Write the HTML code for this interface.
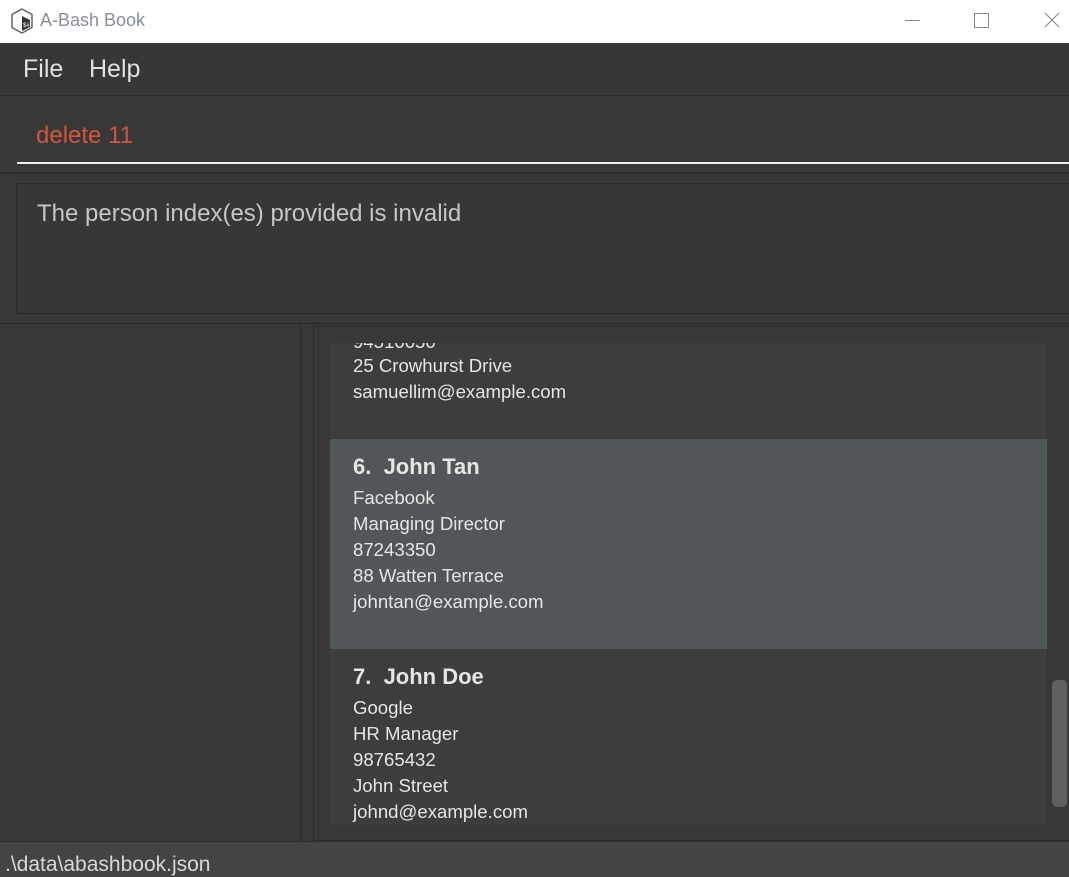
<!DOCTYPE html>
<html><head><meta charset="utf-8">
<style>
*{margin:0;padding:0;box-sizing:border-box}
body{width:1069px;height:877px;overflow:hidden;background:#383838;font-family:"Liberation Sans",sans-serif;position:relative}
.abs{position:absolute}
.t{color:#e6e6e6;font-size:18.6px;line-height:26px;white-space:nowrap}
</style></head><body>
<div class="abs" style="left:0;top:0;width:1069px;height:43px;background:#fff"></div>
<svg class="abs" style="left:10px;top:8px" width="24" height="26" viewBox="0 0 24 26"><path d="M12 1 L22 6.5 V19.5 L12 25 L2 19.5 V6.5 Z" fill="#fff" stroke="#666" stroke-width="1.5"/><path d="M12 8 L20 12 V19 L12 23 Z" fill="#333"/><text x="13" y="19" font-size="6" fill="#fff" font-family="Liberation Sans">$#</text></svg>
<div class="abs" style="left:40px;top:10px;font-size:18px;color:#8a8f96">A-Bash Book</div>
<div class="abs" style="left:905px;top:20px;width:15px;height:1px;background:#888"></div>
<div class="abs" style="left:974px;top:13px;width:15px;height:15px;border:1px solid #888"></div>
<svg class="abs" style="left:1044px;top:12px" width="16" height="16"><path d="M1 1L15 15M15 1L1 15" stroke="#888" stroke-width="1.1"/></svg>
<div class="abs" style="left:0;top:43px;width:1069px;height:53px;background:#373737;border-bottom:1px solid #2b2b2b"></div>
<div class="abs" style="left:23px;top:55px;font-size:25px;color:#e0e0e0">File</div>
<div class="abs" style="left:89px;top:55px;font-size:25px;color:#e0e0e0">Help</div>
<div class="abs" style="left:0;top:97px;width:1069px;height:77px;background:#383838;border-bottom:2px solid #2e2e2e"></div>
<div class="abs" style="left:36px;top:122px;font-size:24px;color:#d4553f">delete 11</div>
<div class="abs" style="left:17px;top:162px;width:1052px;height:2px;background:#ededed"></div>
<div class="abs" style="left:0;top:176px;width:1069px;height:148px;background:#383838;border-bottom:1px solid #2a2a2a"></div>
<div class="abs" style="left:16px;top:183px;width:1060px;height:131px;border:1px solid #2a2a2a;background:#373737"></div>
<div class="abs" style="left:37px;top:200px;font-size:24px;color:#c6c6c6">The person index(es) provided is invalid</div>
<div class="abs" style="left:300px;top:325px;width:2px;height:517px;background:#2e2e2e"></div>
<div class="abs" style="left:313px;top:326px;width:760px;height:515px;border:1px solid #2a2a2a;background:#383838"></div>
<div class="abs" style="left:330px;top:343px;width:717px;height:95px;background:#3c3d3f;overflow:hidden">
 <div class="t abs" style="left:23px;top:-14px">94510050</div>
 <div class="t abs" style="left:23px;top:10px">25 Crowhurst Drive</div>
 <div class="t abs" style="left:23px;top:36px">samuellim@example.com</div>
</div>
<div class="abs" style="left:330px;top:439px;width:717px;height:210px;background:#515658">
 <div class="t abs" style="left:23px;top:15px;font-size:22px;font-weight:bold">6.&nbsp; John Tan</div>
 <div class="t abs" style="left:23px;top:46px">Facebook</div>
 <div class="t abs" style="left:23px;top:72px">Managing Director</div>
 <div class="t abs" style="left:23px;top:98px">87243350</div>
 <div class="t abs" style="left:23px;top:124px">88 Watten Terrace</div>
 <div class="t abs" style="left:23px;top:150px">johntan@example.com</div>
</div>
<div class="abs" style="left:330px;top:649px;width:717px;height:176px;background:#3c3d3f">
 <div class="t abs" style="left:23px;top:15px;font-size:22px;font-weight:bold">7.&nbsp; John Doe</div>
 <div class="t abs" style="left:23px;top:46px">Google</div>
 <div class="t abs" style="left:23px;top:72px">HR Manager</div>
 <div class="t abs" style="left:23px;top:98px">98765432</div>
 <div class="t abs" style="left:23px;top:124px">John Street</div>
 <div class="t abs" style="left:23px;top:150px">johnd@example.com</div>
</div>
<div class="abs" style="left:1052px;top:680px;width:15px;height:127px;background:#606060;border-radius:5px"></div>
<div class="abs" style="left:0;top:841px;width:1069px;height:36px;background:#444;border-top:1px solid #2e2e2e"></div>
<div class="abs" style="left:5px;top:853px;font-size:21px;color:#d8d8d8">.\data\abashbook.json</div>
</body></html>
